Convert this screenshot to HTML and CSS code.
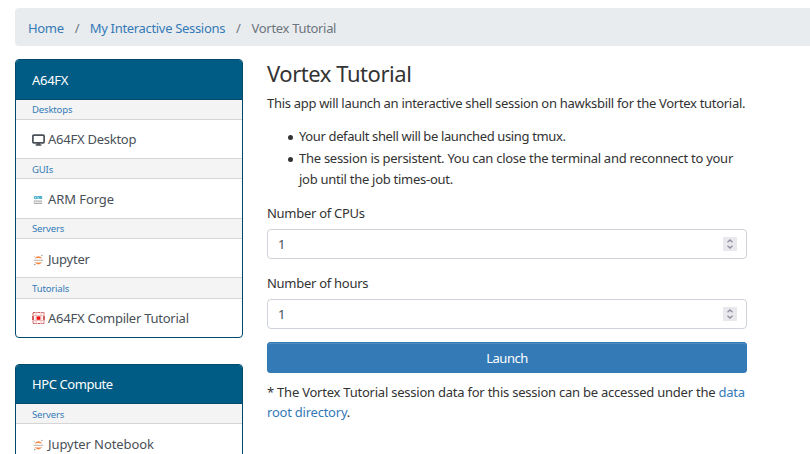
FILE: index.html
```html
<!DOCTYPE html>
<html lang="en">
<head>
<meta charset="utf-8">
<title>Vortex Tutorial</title>
<link rel="stylesheet" href="styles.css">
</head>
<body>
<svg width="0" height="0" class="defs" aria-hidden="true">
  <symbol id="jupyter" viewBox="0 0 12 12">
    <path d="M1.9 4.5Q5.8 -.2 9.9 4.5Q5.8 3.5 1.9 4.5ZM1.9 8Q5.8 12.8 9.9 8Q5.8 9.1 1.9 8Z" fill="#f58a47"/>
    <path d="M1.2 6.3H10.6" stroke="#c4c0bd" stroke-width="1.3"/>
    <circle cx="9.4" cy="1.5" r=".7" fill="#999"/><circle cx="2.3" cy="10.6" r=".8" fill="#999"/><circle cx="2" cy="2.2" r=".5" fill="#aaa"/>
  </symbol>
</svg>
<nav><ol class="breadcrumb">
  <li><a href="#">Home</a></li>
  <li><a href="#">My Interactive Sessions</a></li>
  <li>Vortex Tutorial</li>
</ol></nav>
<div class="layout">
  <aside>
    <section class="card">
      <h2>A64FX</h2>
      <p class="group">Desktops</p>
      <a class="item" href="#"><svg viewBox="0 0 13 12"><rect x=".9" y="1.1" width="11.2" height="7.8" rx=".8" fill="none" stroke="#495057" stroke-width="1.7"/><path d="M5.2 9h2.6v1.3h1.6v1.4H3.6v-1.4h1.6z" fill="#495057"/></svg><span>A64FX Desktop</span></a>
      <p class="group">GUIs</p>
      <a class="item" href="#"><svg viewBox="0 0 13 12"><g fill="none" stroke="#55b2cf" stroke-width="1.1"><circle cx="3.4" cy="3.5" r="1.1"/><path d="M4.7 2.2v2.7M6 5V2.6h1.2M7.6 5V2.6h2V5M8.6 2.6V5"/></g><path d="M2 7h8M2 9.5h8" stroke="#999" stroke-width=".8"/><path d="M2.2 6.8v3M4.2 6.8v3M6.1 6.8v3M8 6.8v3M9.7 6.8v3" stroke="#bbb" stroke-width=".8"/></svg><span class="wide">ARM Forge</span></a>
      <p class="group">Servers</p>
      <a class="item" href="#"><svg viewBox="0 0 12 12"><use href="#jupyter"/></svg><span>Jupyter</span></a>
      <p class="group">Tutorials</p>
      <a class="item" href="#"><svg viewBox="0 0 12 12"><rect x=".5" y=".5" width="11" height="11" fill="#fff8f8" stroke="#c55" stroke-dasharray="2 .6"/><path d="M3.5 0v12M8.5 0v12M0 3.5h12M0 8.5h12" stroke="#efb0b0" stroke-width=".8"/><rect x="4.2" y="4.4" width="3.6" height="3.4" fill="#f00e0e"/><path d="M.5 4v4M11.5 4v4" stroke="#b22" stroke-width="1.2"/></svg><span>A64FX Compiler Tutorial</span></a>
    </section>
    <section class="card compact">
      <h2>HPC Compute</h2>
      <p class="group">Servers</p>
      <a class="item" href="#"><svg viewBox="0 0 12 12"><use href="#jupyter"/></svg><span>Jupyter Notebook</span></a>
    </section>
  </aside>
  <main>
    <h1>Vortex Tutorial</h1>
    <p class="intro">This app will launch an interactive shell session on hawksbill for the Vortex tutorial.</p>
    <ul>
      <li>Your default shell will be launched using tmux.</li>
      <li>The session is persistent. You can close the terminal and reconnect to your<br>job until the job times-out.</li>
    </ul>
    <div class="field"><div class="label">Number of CPUs</div><div class="number"><span>1</span><svg class="spin" viewBox="0 0 14 14"><path d="M4.5 5.2 7 2.9 9.5 5.2M4.5 8.8 7 11.1 9.5 8.8"/></svg></div></div>
    <div class="field"><div class="label">Number of hours</div><div class="number"><span>1</span><svg class="spin" viewBox="0 0 14 14"><path d="M4.5 5.2 7 2.9 9.5 5.2M4.5 8.8 7 11.1 9.5 8.8"/></svg></div></div>
    <button type="button">Launch</button>
    <p class="note">* The Vortex Tutorial session data for this session can be accessed under the <a href="#">data<br>root directory</a>.</p>
  </main>
</div>
</body>
</html>
```
FILE: styles.css
```css
* { box-sizing: border-box; }
html { overflow: hidden; }
body {
  margin: 0;
  padding: 8px 0 0 15px;
  height: 454px;
  overflow: hidden;
  font: 13px/21px "Noto Sans", sans-serif;
  letter-spacing: -0.28px;
  color: #333;
  background: #fff;
}
a { color: #337ab7; text-decoration: none; }
h1, h2, p, ul, ol { margin: 0; padding: 0; font-weight: 400; }
.defs { position: absolute; }
.breadcrumb {
  display: flex;
  height: 38px;
  padding: 10px 13px;
  list-style: none;
  color: #6c757d;
  background: #e9ecef;
  border-radius: 4px 0 0 4px;
  letter-spacing: -0.32px;
}
.breadcrumb li { white-space: nowrap; }
.breadcrumb li + li::before { content: "/"; padding: 0 11px; }
.breadcrumb li:nth-child(2)::before { padding-right: 10.5px; }
.layout { display: grid; grid-template-columns: 228px 480px; column-gap: 24px; padding-top: 13px; }
.card {
  height: 279px;
  margin-bottom: 26px;
  overflow: hidden;
  border: 1px solid #00496a;
  border-radius: 4px;
}
.card h2 {
  height: 40px;
  padding: 10px 16px 0;
  font-size: 13px;
  line-height: 21px;
  color: #fff;
  background: #005c84;
  border-bottom: 1px solid #00496a;
}
.compact h2 { height: 39px; padding-top: 9px; letter-spacing: -0.42px; }
.group {
  height: 20px;
  padding-left: 16px;
  font-size: 9.5px;
  line-height: 19px;
  letter-spacing: -0.15px;
  color: #337ab7;
  background: #f4f4f4;
  border-bottom: 1px solid #d5d5d5;
}
.group:nth-of-type(2), .compact .group { line-height: 21px; }
.group:nth-of-type(4) { height: 21px; line-height: 21px; }
.item {
  display: flex;
  align-items: center;
  height: 39px;
  padding: 1px 0 0 16px;
  color: #495057;
  letter-spacing: -0.25px;
  border-bottom: 1px solid #d5d5d5;
}
.item:nth-of-type(2) { height: 40px; padding-top: 2px; }
.item:nth-of-type(3) { padding-top: 3px; }
.item:last-child { height: 38px; padding-top: 0; border-bottom: 0; }
.compact .item:last-child { height: 39px; padding-top: 2px; letter-spacing: -0.08px; }
.item svg { width: 13px; height: 12px; margin-right: 3px; }
.wide { letter-spacing: -0.08px; }
h1 { height: 30px; font-size: 22px; line-height: 29px; letter-spacing: -0.45px; }
main { white-space: nowrap; }
.intro { margin-top: 4px; letter-spacing: -0.3px; }
ul { margin-top: 12px; padding-left: 32px; line-height: 21.5px; letter-spacing: -0.27px; list-style: none; }
ul li:first-child { letter-spacing: -0.37px; }
ul li::before {
  content: "";
  display: inline-block;
  width: 5px;
  height: 5px;
  margin: 0 6px 0 -11px;
  vertical-align: middle;
  border-radius: 50%;
  background: #333;
}
.field { height: 70px; }
.field:first-of-type { margin-top: 12px; }
.field:nth-of-type(2) { height: 69px; }
.label { height: 26px; }
.number {
  display: flex;
  align-items: center;
  justify-content: space-between;
  height: 30px;
  padding: 0 9px 0 10px;
  border: 1px solid #ced4da;
  border-radius: 4px;
  color: #495057;
}
.number span { padding-top: 2px; }
.spin { width: 14px; height: 14px; background: #e9e9ed; }
.spin path { fill: none; stroke: #8f8f9d; stroke-width: 1.3; }
button {
  display: block;
  width: 480px;
  height: 31px;
  padding: 2px 0 0;
  font: inherit;
  letter-spacing: -0.5px;
  color: #fff;
  background: #337ab7;
  border: 1px solid #337ab7;
  border-radius: 3px;
  box-shadow: inset 0 1px 0 rgba(255, 255, 255, .15);
}
.note { margin-top: 9px; line-height: 20px; letter-spacing: -0.23px; }
```
